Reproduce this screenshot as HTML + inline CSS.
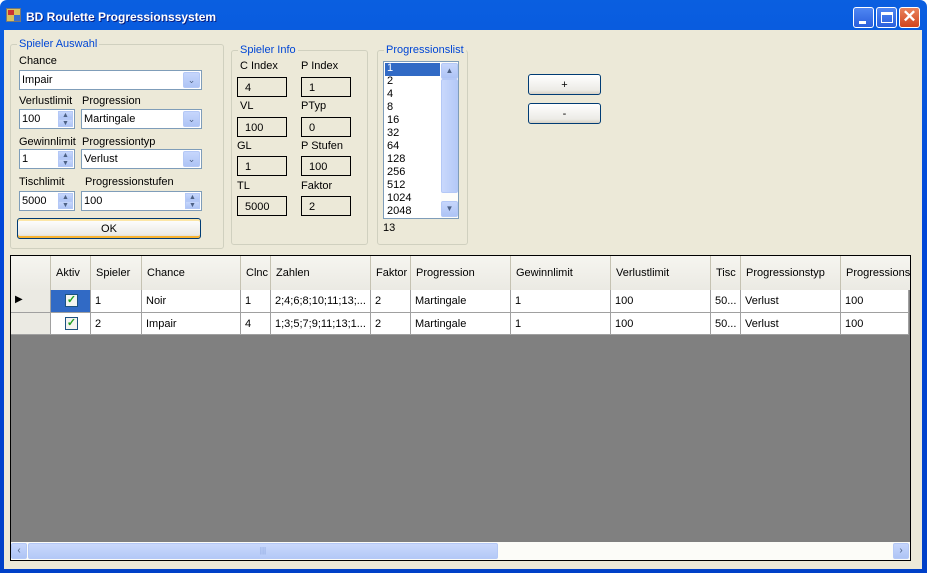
<!DOCTYPE html>
<html><head><meta charset="utf-8"><style>
*{box-sizing:border-box;margin:0;padding:0}
body{width:927px;height:573px;overflow:hidden;background:#fff;font-family:"Liberation Sans",Arial,sans-serif;font-size:11px;color:#000;position:relative}
.a{position:absolute}
#win{left:0;top:0;width:927px;height:573px;background:linear-gradient(#0a5fe0,#0046d8 40%,#0040c8);border-radius:7px 7px 0 0}
#cl{left:4px;top:30px;width:918px;height:539px;background:#ece9d8}
.t{position:absolute;white-space:nowrap}
.grp{position:absolute;border:1px solid #d0d0bf;border-radius:3px}
.lg{position:absolute;color:#0046d5;background:#ece9d8;padding:0 2px;top:-7px;left:6px;white-space:nowrap}
.tb{position:absolute;background:#fff;border:1px solid #7f9db9;padding:3px 0 0 2px}
.ib{position:absolute;border:1px solid #000;padding:4px 0 0 7px}
.dd{position:absolute;right:1px;top:1px;bottom:1px;width:17px;background:linear-gradient(#c6d6fc,#aec4f5);border:1px solid #b4c8f6;border-radius:2px;color:#4d6185;font-size:9px;text-align:center;line-height:15px}
.sp{position:absolute;right:1px;top:1px;bottom:1px;width:15px;}
.sp div{height:50%;background:linear-gradient(#c6d6fc,#aec4f5);border:1px solid #b4c8f6;font-size:7px;line-height:7px;text-align:center;color:#4d6185}
.btn{position:absolute;border:1px solid #003c74;border-radius:3px;background:linear-gradient(#fff,#ecebe6 80%,#d6d0c5);text-align:center}
.hc{position:absolute;top:0;height:34px;border-right:1px solid #c5c2b2;padding:11px 0 0 5px;white-space:nowrap;overflow:hidden;background:linear-gradient(#f6f5f0,#ebeae3)}
.rc{position:absolute;height:23px;border-right:1px solid #a0a0a0;border-bottom:1px solid #a0a0a0;padding:5px 0 0 4px;white-space:nowrap;overflow:hidden;background:#fff}
.cb{position:absolute;left:14px;top:4px;width:13px;height:13px;border:1px solid #1c5180;background:#f4f4f0;color:#21a121;font-size:11px;line-height:11px;text-align:center;font-weight:bold}
</style></head><body>
<div id="win" class="a"></div>
<div class="a" style="left:6px;top:8px;width:15px;height:14px;background:#d9c160;border:1px solid #777"><div class="a" style="left:1px;top:1px;width:6px;height:5px;background:#c33"></div><div class="a" style="left:7px;top:6px;width:6px;height:6px;background:#3a6fd0"></div></div>
<div class="t" style="left:26px;top:10px;color:#fff;font-weight:bold;font-size:12px;text-shadow:1px 1px #0a1e80">BD Roulette Progressionssystem</div>
<div class="a" style="left:853px;top:7px;width:21px;height:21px;border:1px solid #fff;border-radius:3px;background:linear-gradient(#4f86f2,#2a5fdc)"><div class="a" style="left:5px;top:13px;width:7px;height:3px;background:#fff"></div></div>
<div class="a" style="left:876px;top:7px;width:21px;height:21px;border:1px solid #fff;border-radius:3px;background:linear-gradient(#4f86f2,#2a5fdc)"><div class="a" style="left:4px;top:4px;width:12px;height:11px;border:1px solid #fff;border-top-width:3px"></div></div>
<div class="a" style="left:899px;top:7px;width:21px;height:21px;border:1px solid #fff;border-radius:3px;background:linear-gradient(#e9835d,#d2441c);color:#fff;font-size:17px;line-height:18px;text-align:center;font-weight:bold">✕</div>
<div id="cl" class="a"></div>

<div class="grp" style="left:10px;top:44px;width:214px;height:205px"><div class="lg">Spieler Auswahl</div></div>
<div class="t" style="left:19px;top:55px">Chance</div>
<div class="tb" style="left:19px;top:70px;width:183px;height:20px">Impair<div class="dd">⌄</div></div>
<div class="t" style="left:19px;top:95px">Verlustlimit</div><div class="t" style="left:82px;top:95px">Progression</div>
<div class="tb" style="left:19px;top:109px;width:56px;height:20px">100<div class="sp"><div>▲</div><div>▼</div></div></div>
<div class="tb" style="left:81px;top:109px;width:121px;height:20px">Martingale<div class="dd">⌄</div></div>
<div class="t" style="left:19px;top:136px">Gewinnlimit</div><div class="t" style="left:82px;top:136px">Progressiontyp</div>
<div class="tb" style="left:19px;top:149px;width:56px;height:20px">1<div class="sp"><div>▲</div><div>▼</div></div></div>
<div class="tb" style="left:81px;top:149px;width:121px;height:20px">Verlust<div class="dd">⌄</div></div>
<div class="t" style="left:19px;top:176px">Tischlimit</div><div class="t" style="left:85px;top:176px">Progressionstufen</div>
<div class="tb" style="left:19px;top:191px;width:56px;height:20px">5000<div class="sp"><div>▲</div><div>▼</div></div></div>
<div class="tb" style="left:81px;top:191px;width:121px;height:20px">100<div class="sp"><div>▲</div><div>▼</div></div></div>
<div class="btn" style="left:17px;top:218px;width:184px;height:21px;padding-top:4px;box-shadow:inset 0 -2px #f8b330,inset 0 2px #fce6a6">OK</div>

<div class="grp" style="left:231px;top:50px;width:137px;height:195px"><div class="lg">Spieler Info</div></div>
<div class="t" style="left:240px;top:60px">C Index</div><div class="t" style="left:301px;top:60px">P Index</div>
<div class="ib" style="left:237px;top:77px;width:50px;height:20px">4</div><div class="ib" style="left:301px;top:77px;width:50px;height:20px">1</div>
<div class="t" style="left:240px;top:100px">VL</div><div class="t" style="left:301px;top:100px">PTyp</div>
<div class="ib" style="left:237px;top:117px;width:50px;height:20px">100</div><div class="ib" style="left:301px;top:117px;width:50px;height:20px">0</div>
<div class="t" style="left:237px;top:140px">GL</div><div class="t" style="left:301px;top:140px">P Stufen</div>
<div class="ib" style="left:237px;top:156px;width:50px;height:20px">1</div><div class="ib" style="left:301px;top:156px;width:50px;height:20px">100</div>
<div class="t" style="left:237px;top:180px">TL</div><div class="t" style="left:301px;top:180px">Faktor</div>
<div class="ib" style="left:237px;top:196px;width:50px;height:20px">5000</div><div class="ib" style="left:301px;top:196px;width:50px;height:20px">2</div>

<div class="grp" style="left:377px;top:50px;width:91px;height:195px"><div class="lg">Progressionslist</div></div>
<div class="a" style="left:383px;top:61px;width:76px;height:158px;background:#fff;border:1px solid #7f9db9;overflow:hidden">
<div style="position:absolute;left:1px;top:1px;width:55px;height:13px;background:#316ac5"></div>
<div style="position:absolute;left:3px;top:0;line-height:13px;color:#000"><span style="color:#fff">1</span><br>2<br>4<br>8<br>16<br>32<br>64<br>128<br>256<br>512<br>1024<br>2048</div>
<div style="position:absolute;left:57px;top:0;width:17px;height:156px;background:#fdfdfa">
<div class="a" style="left:0;top:1px;width:17px;height:16px;background:linear-gradient(#c6d6fc,#aec4f5);border:1px solid #b4c8f6;border-radius:2px;font-size:8px;text-align:center;line-height:14px;color:#4d6185">▲</div>
<div class="a" style="left:0;top:17px;width:17px;height:114px;background:linear-gradient(90deg,#c9d8fc,#b4c9f7);border:1px solid #b4c8f6;border-radius:2px"></div>
<div class="a" style="left:0;top:139px;width:17px;height:16px;background:linear-gradient(#c6d6fc,#aec4f5);border:1px solid #b4c8f6;border-radius:2px;font-size:8px;text-align:center;line-height:14px;color:#4d6185">▼</div>
</div></div>
<div class="t" style="left:383px;top:222px">13</div>

<div class="btn" style="left:528px;top:74px;width:73px;height:21px;padding-top:4px">+</div>
<div class="btn" style="left:528px;top:103px;width:73px;height:21px;padding-top:4px">-</div>

<div class="a" style="left:10px;top:255px;width:901px;height:306px;border:1px solid #000;background:#808080;overflow:hidden">
<div class="a" style="left:0;top:0;width:899px;height:34px;background:#ebeae3"></div>
<div class="hc" style="left:0;width:40px"></div>
<div class="hc" style="left:40px;width:40px">Aktiv</div>
<div class="hc" style="left:80px;width:51px">Spieler</div>
<div class="hc" style="left:131px;width:99px">Chance</div>
<div class="hc" style="left:230px;width:30px">Clnc</div>
<div class="hc" style="left:260px;width:100px">Zahlen</div>
<div class="hc" style="left:360px;width:40px">Faktor</div>
<div class="hc" style="left:400px;width:100px">Progression</div>
<div class="hc" style="left:500px;width:100px">Gewinnlimit</div>
<div class="hc" style="left:600px;width:100px">Verlustlimit</div>
<div class="hc" style="left:700px;width:30px">Tisc</div>
<div class="hc" style="left:730px;width:100px">Progressionstyp</div>
<div class="hc" style="left:830px;width:80px">Progressionsstufen</div>

<div class="rc" style="left:0;top:34px;width:40px;background:#ebeae3;padding:4px 0 0 4px;font-size:10px">▶</div>
<div class="rc" style="left:40px;top:34px;width:40px;background:#316ac5"><div class="cb">✓</div></div>
<div class="rc" style="left:80px;top:34px;width:51px">1</div>
<div class="rc" style="left:131px;top:34px;width:99px">Noir</div>
<div class="rc" style="left:230px;top:34px;width:30px">1</div>
<div class="rc" style="left:260px;top:34px;width:100px">2;4;6;8;10;11;13;...</div>
<div class="rc" style="left:360px;top:34px;width:40px">2</div>
<div class="rc" style="left:400px;top:34px;width:100px">Martingale</div>
<div class="rc" style="left:500px;top:34px;width:100px">1</div>
<div class="rc" style="left:600px;top:34px;width:100px">100</div>
<div class="rc" style="left:700px;top:34px;width:30px">50...</div>
<div class="rc" style="left:730px;top:34px;width:100px">Verlust</div>
<div class="rc" style="left:830px;top:34px;width:68px">100</div>

<div class="rc" style="left:0;top:57px;width:40px;background:#ebeae3;height:22px"></div>
<div class="rc" style="left:40px;top:57px;width:40px;height:22px"><div class="cb">✓</div></div>
<div class="rc" style="left:80px;top:57px;width:51px;height:22px">2</div>
<div class="rc" style="left:131px;top:57px;width:99px;height:22px">Impair</div>
<div class="rc" style="left:230px;top:57px;width:30px;height:22px">4</div>
<div class="rc" style="left:260px;top:57px;width:100px;height:22px">1;3;5;7;9;11;13;1...</div>
<div class="rc" style="left:360px;top:57px;width:40px;height:22px">2</div>
<div class="rc" style="left:400px;top:57px;width:100px;height:22px">Martingale</div>
<div class="rc" style="left:500px;top:57px;width:100px;height:22px">1</div>
<div class="rc" style="left:600px;top:57px;width:100px;height:22px">100</div>
<div class="rc" style="left:700px;top:57px;width:30px;height:22px">50...</div>
<div class="rc" style="left:730px;top:57px;width:100px;height:22px">Verlust</div>
<div class="rc" style="left:830px;top:57px;width:68px;height:22px">100</div>

<div class="a" style="left:0;top:286px;width:899px;height:18px;background:#fcfcf8">
<div class="a" style="left:0;top:1px;width:16px;height:16px;background:linear-gradient(#c6d6fc,#aec4f5);border:1px solid #b4c8f6;border-radius:2px;font-size:10px;text-align:center;line-height:14px;color:#4d6185">‹</div>
<div class="a" style="left:17px;top:1px;width:470px;height:16px;background:linear-gradient(#c9d8fc,#b4c9f7);border:1px solid #b4c8f6;border-radius:2px;text-align:center;font-size:8px;color:#8aa4dd;line-height:14px">|||</div>
<div class="a" style="left:882px;top:1px;width:16px;height:16px;background:linear-gradient(#c6d6fc,#aec4f5);border:1px solid #b4c8f6;border-radius:2px;font-size:10px;text-align:center;line-height:14px;color:#4d6185">›</div>
</div>
</div>
</body></html>
